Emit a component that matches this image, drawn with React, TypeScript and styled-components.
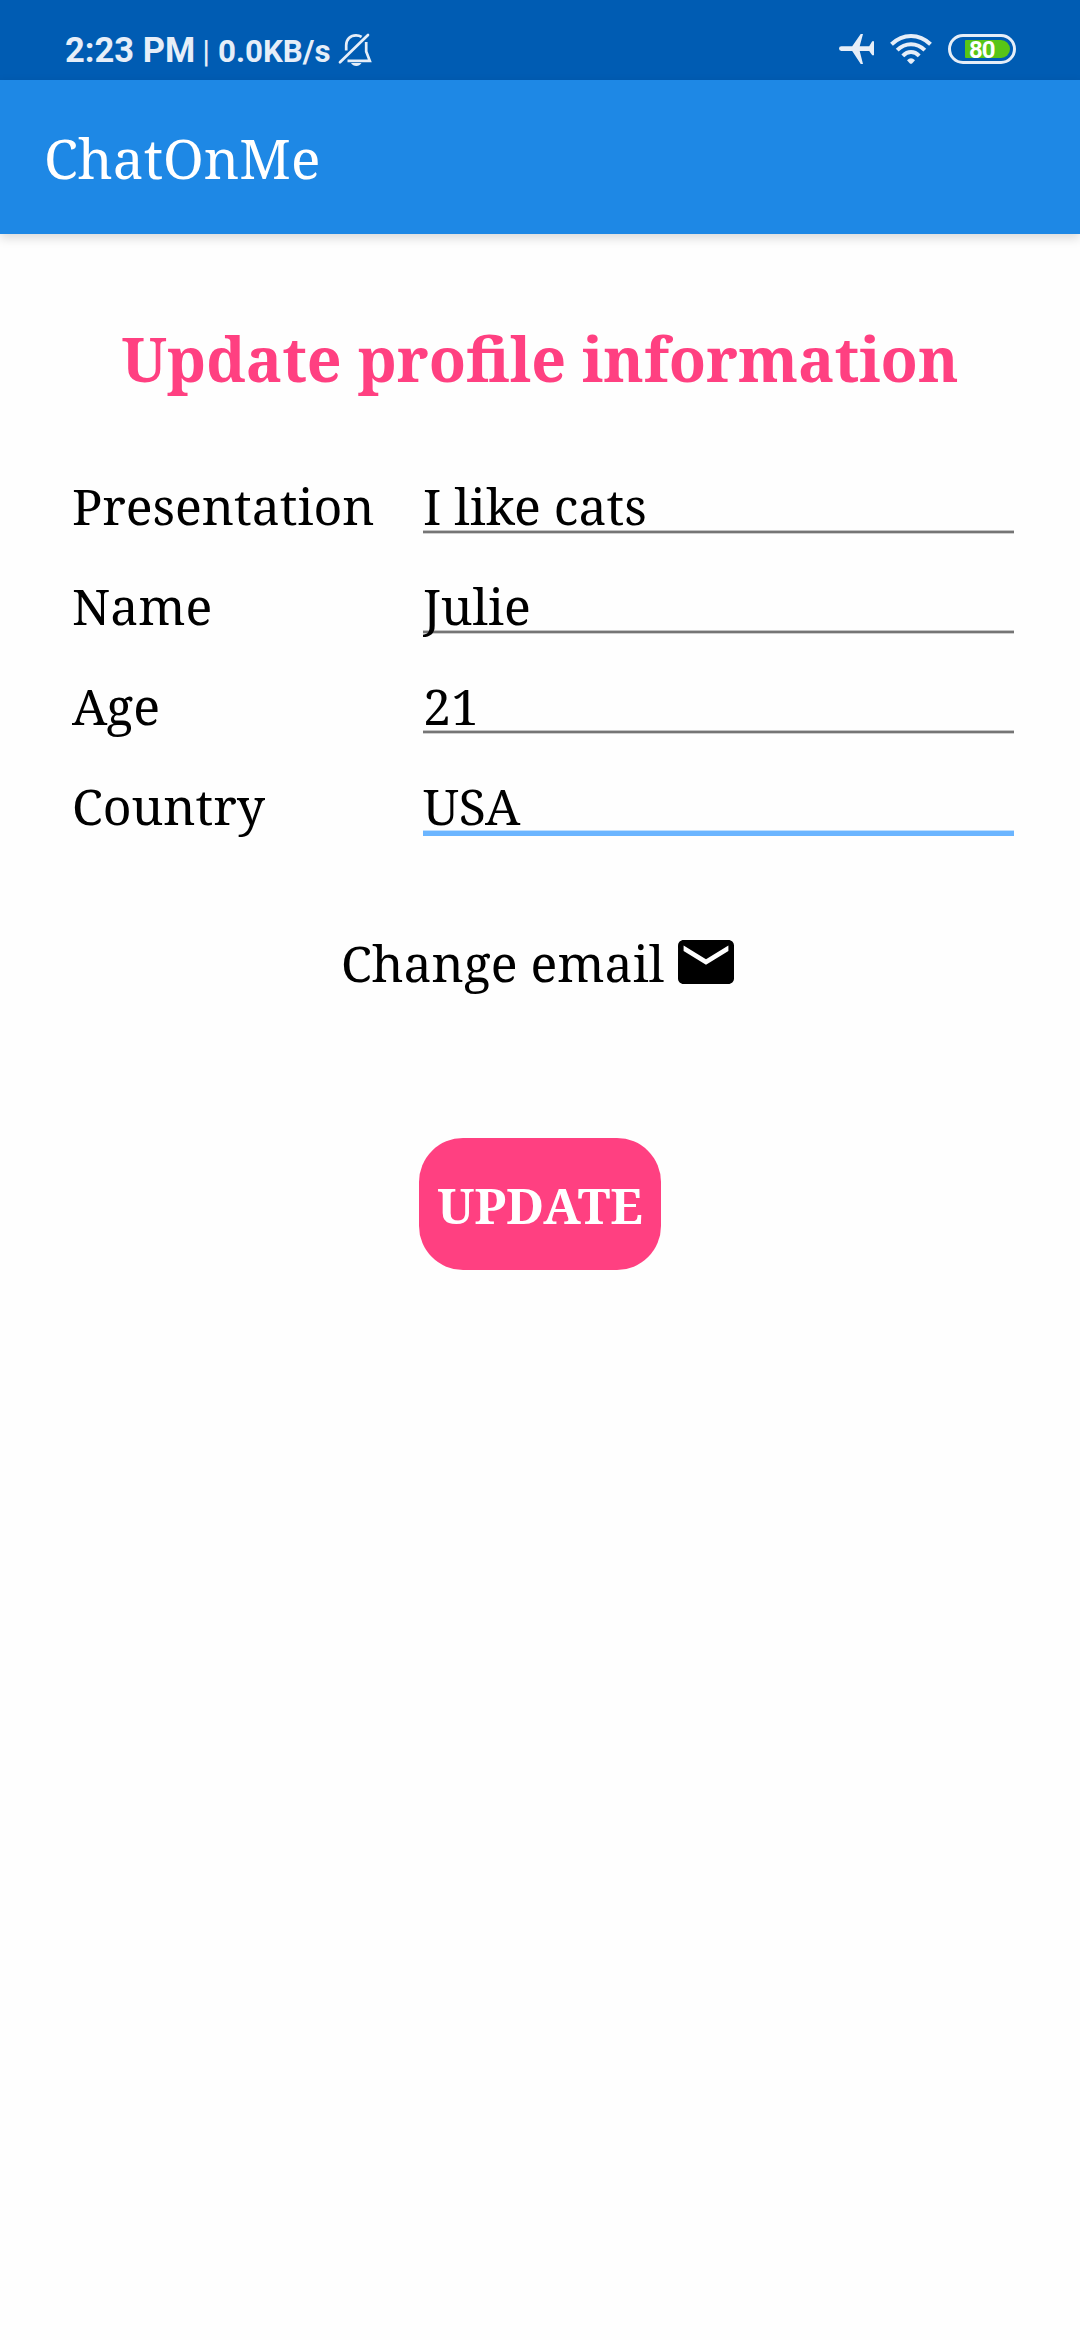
import React from "react";
import styled, { createGlobalStyle } from "styled-components";

const GlobalStyle = createGlobalStyle`
  * { box-sizing: border-box; }
  body { margin: 0; background: #fefefe; }
`;

const serif = `"Noto Serif", "Droid Serif", "DejaVu Serif Condensed", "DejaVu Serif", serif`;

const Screen = styled.div`
  width: 1080px;
  height: 2340px;
  display: flex;
  flex-direction: column;
  background: #fefefe;
  color: #000;
  font-family: ${serif};
  overflow: hidden;
`;

const StatusBar = styled.header`
  flex: none;
  height: 80px;
  padding: 20px 64px 0 65px;
  display: flex;
  align-items: flex-start;
  background: #005cb3;
  color: #e6eef8;
  font-family: Roboto, sans-serif;
`;

const StatusText = styled.span<{ $size: number; $weight: number; $gap: number; $line: number }>`
  font-size: ${(p) => p.$size}px;
  font-weight: ${(p) => p.$weight};
  line-height: ${(p) => p.$line}px;
  height: 60px;
  margin-right: ${(p) => p.$gap}px;
  white-space: pre;
`;

const StatusIcon = styled.svg<{ $top: number; $right: number }>`
  flex: none;
  display: block;
  margin-top: ${(p) => p.$top}px;
  margin-right: ${(p) => p.$right}px;
`;

const Spacer = styled.div`
  flex: 1;
`;

const Battery = styled.div`
  width: 68px;
  height: 30px;
  margin-top: 14px;
  border: 3px solid #e6eef8;
  border-radius: 15px;
  padding: 3px 3px 3px 14px;
`;

const BatteryLevel = styled.div`
  height: 18px;
  padding-left: 4px;
  border-radius: 1px 9px 9px 1px;
  background: #58c516;
  color: #fff;
  font-size: 24px;
  font-weight: 700;
  line-height: 20px;
  letter-spacing: -1px;
`;

const AppBar = styled.div`
  flex: none;
  height: 154px;
  padding-left: 44px;
  background: #1e88e5;
  color: #fff;
  font-size: 55px;
  line-height: 155px;
  box-shadow: 0 4px 10px rgba(0, 0, 0, 0.15);
`;

const Heading = styled.h1`
  flex: none;
  margin: 76px 0 0;
  height: 100px;
  font-size: 60.9px;
  line-height: 97px;
  text-align: center;
  font-weight: 700;
  color: #ff4081;
`;

const Form = styled.form`
  flex: none;
  margin-top: 47px;
  display: flex;
  flex-direction: column;
`;

const Row = styled.label`
  height: 100px;
  padding: 0 66px 0 72px;
  display: grid;
  grid-template-columns: 351px 1fr;
  font-size: 50px;
  line-height: 98px;
`;

const Field = styled.input<{ $active?: boolean }>`
  width: 100%;
  height: 100px;
  padding: 0 0 2px;
  border: 0;
  outline: 0;
  border-radius: 0;
  color: #000;
  font-family: ${serif};
  font-size: 50px;
  line-height: 98px;
  background: ${(p) =>
    p.$active
      ? "linear-gradient(#c0dffe 0 1px, #6bb5ff 1px) 0 73px / 100% 6px no-repeat"
      : "linear-gradient(#c4c4c4 0 1px, #757575 1px 3px, #cfcfcf 3px) 0 73px / 100% 4px no-repeat"};
`;

const EmailLink = styled.div`
  flex: none;
  height: 100px;
  margin-top: 56px;
  padding-left: 341px;
  display: flex;
  align-items: center;
  font-size: 50px;
  line-height: 100px;
`;

const EmailText = styled.span`
  width: 337px;
`;

const MailIcon = styled.svg`
  display: block;
  margin-bottom: 2px;
`;

const UpdateButton = styled.button`
  flex: none;
  align-self: center;
  display: flex;
  justify-content: center;
  align-items: flex-start;
  width: 242px;
  height: 132px;
  margin-top: 125px;
  padding: 0;
  border: 0;
  border-radius: 44px;
  background: #ff4081;
  color: #fff;
  font-family: ${serif};
  font-size: 49.8px;
  font-weight: 700;
  line-height: 134px;
`;

const fields = [
  { label: "Presentation", value: "I like cats" },
  { label: "Name", value: "Julie" },
  { label: "Age", value: "21" },
  { label: "Country", value: "USA", active: true },
];

function MutedBell() {
  return (
    <StatusIcon $top={13} $right={0} width="34" height="34" viewBox="0 0 34 34" fill="none" stroke="#e6eef8" strokeWidth="2.7">
      <path d="M2 29.3 30 2" strokeLinecap="round" />
      <path d="M8.2 17.5V12.5C8.2 6 12.5 2.4 18 2.4c2.2 0 4 .5 5.6 1.5M28.2 9v9.5l3.6 9.3H9.5" />
      <path d="M13 30h10.5c-1.2 2-3 3-5.2 3s-4.2-1-5.3-3z" fill="#e6eef8" stroke="none" />
    </StatusIcon>
  );
}

function Airplane() {
  return (
    <StatusIcon $top={14} $right={16} width="35" height="30" viewBox="0 0 35 30" fill="#e6eef8">
      <path d="M2.4 12.2H13.2L21.7 0H24L20.7 12.2H30.2L33.2 7.3H35V21.3H33.2L30.2 17H20.7L24 30H21.7L13.2 17H2.4A2.4 2.4 0 0 1 2.4 12.2z" />
    </StatusIcon>
  );
}

function Wifi() {
  return (
    <StatusIcon $top={14} $right={16} width="42" height="30" viewBox="0 0 42 30" fill="none" stroke="#e6eef8" strokeWidth="4">
      <path d="M1.5 10.3Q10 2 21 2T40.5 10.3" />
      <path d="M7.2 16.2Q13.2 10.2 21 10.2T34.8 16.2" />
      <path d="M12.8 21.8Q16.5 18 21 18T29.2 21.8" />
      <path d="M17 26.2Q21 22.5 25 26.2L22.3 29.2Q21 30.5 19.7 29.2z" fill="#e6eef8" stroke="none" />
    </StatusIcon>
  );
}

function Envelope() {
  return (
    <MailIcon width="56" height="44" viewBox="2 4 20 16" preserveAspectRatio="none">
      <path d="M20 4H4c-1.1 0-1.99.9-1.99 2L2 18c0 1.1.9 2 2 2h16c1.1 0 2-.9 2-2V6c0-1.1-.9-2-2-2zm0 4l-8 5-8-5V6l8 5 8-5v2z" />
    </MailIcon>
  );
}

export default function App() {
  return (
    <Screen>
      <GlobalStyle />
      <StatusBar>
        <StatusText $size={34.5} $weight={700} $gap={7} $line={60}>2:23 PM</StatusText>
        <StatusText $size={32} $weight={400} $gap={8} $line={62}>|</StatusText>
        <StatusText $size={31.3} $weight={700} $gap={7} $line={63}>0.0KB/s</StatusText>
        <MutedBell />
        <Spacer />
        <Airplane />
        <Wifi />
        <Battery>
          <BatteryLevel>80</BatteryLevel>
        </Battery>
      </StatusBar>
      <AppBar>ChatOnMe</AppBar>
      <Heading>Update profile information</Heading>
      <Form>
        {fields.map((f) => (
          <Row key={f.label}>
            <span>{f.label}</span>
            <Field defaultValue={f.value} $active={f.active} spellCheck={false} />
          </Row>
        ))}
      </Form>
      <EmailLink>
        <EmailText>Change email</EmailText>
        <Envelope />
      </EmailLink>
      <UpdateButton type="button">UPDATE</UpdateButton>
    </Screen>
  );
}
